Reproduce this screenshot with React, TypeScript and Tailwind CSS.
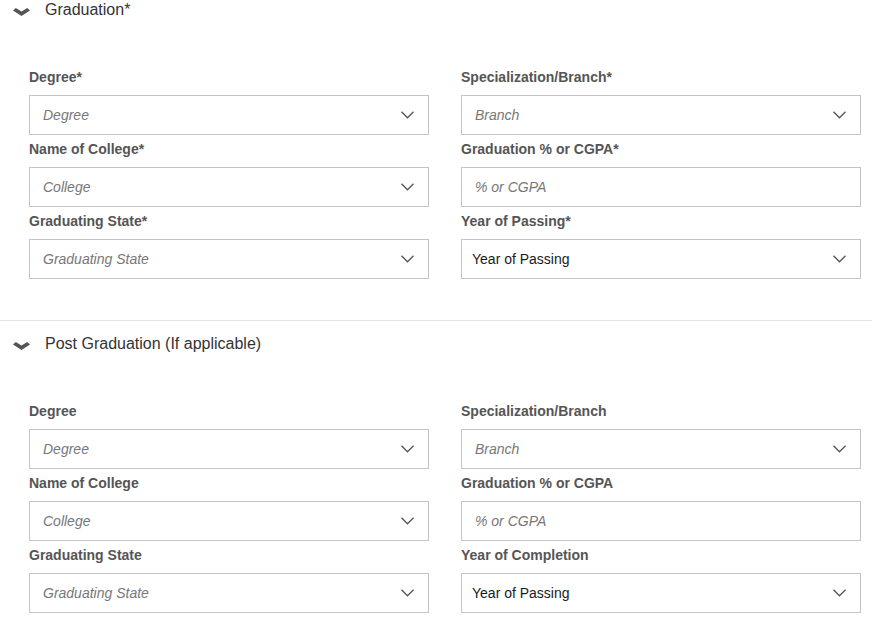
import React from "react";

type Field = { label: string; value: string; select: boolean; filled?: boolean };

const HeaderChevron = () => (
  <svg width="17" height="8" viewBox="0 0 17 8" className="block">
    <path d="M0 2.6 L2.8 0 L8.5 3.6 L14.2 0 L17 2.6 L8.5 8 Z" fill="#555" />
  </svg>
);

const SelectArrow = () => (
  <svg width="13" height="8" viewBox="0 0 13 8" className="block">
    <polyline points="0.5,0.8 6.5,6.8 12.5,0.8" fill="none" stroke="#555" strokeWidth="1.3" />
  </svg>
);

const FieldBox = ({ f }: { f: Field }) => (
  <div className="flex flex-col">
    <div className="h-[18px] mb-[9px] text-[14px] leading-[18px] font-bold text-[#555]">{f.label}</div>
    <div
      className={
        f.filled
          ? "h-[40px] border border-[#c4c4c4] bg-white flex items-center pl-[10px] pr-[14px]"
          : "h-[40px] border border-[#c4c4c4] bg-white flex items-center pl-[13px] pr-[14px]"
      }
    >
      <span
        className={
          f.filled
            ? "flex-1 text-[14px] text-[#1a1a1a]"
            : "flex-1 text-[14px] italic text-[#777]"
        }
      >
        {f.value}
      </span>
      {f.select && <SelectArrow />}
    </div>
    <div className="h-[5px]" />
  </div>
);

const Section = ({ title, left, right }: { title: string; left: Field[]; right: Field[] }) => (
  <div>
    <div className="h-[20px] flex items-center">
      <div className="w-[45px] pl-[13px] pt-[3px]">
        <HeaderChevron />
      </div>
      <div className="text-[16px] leading-[20px] text-[#333]">{title}</div>
    </div>
    <div className="pt-[48px] pl-[29px] grid grid-cols-[400px_400px] gap-x-[32px]">
      <div className="flex flex-col">
        {left.map((f) => (
          <FieldBox key={f.label} f={f} />
        ))}
      </div>
      <div className="flex flex-col">
        {right.map((f) => (
          <FieldBox key={f.label} f={f} />
        ))}
      </div>
    </div>
  </div>
);

export default function App() {
  return (
    <div className="w-[873px] h-[626px] overflow-hidden bg-white" style={{ fontFamily: '"Liberation Sans", Arial, sans-serif' }}>
      <Section
        title="Graduation*"
        left={[
          { label: "Degree*", value: "Degree", select: true },
          { label: "Name of College*", value: "College", select: true },
          { label: "Graduating State*", value: "Graduating State", select: true },
        ]}
        right={[
          { label: "Specialization/Branch*", value: "Branch", select: true },
          { label: "Graduation % or CGPA*", value: "% or CGPA", select: false },
          { label: "Year of Passing*", value: "Year of Passing", select: true, filled: true },
        ]}
      />
      <div className="mt-[36px] h-px bg-[#e6e6e6] w-[872px]" />
      <div className="pt-[13px]">
        <Section
          title="Post Graduation (If applicable)"
          left={[
            { label: "Degree", value: "Degree", select: true },
            { label: "Name of College", value: "College", select: true },
            { label: "Graduating State", value: "Graduating State", select: true },
          ]}
          right={[
            { label: "Specialization/Branch", value: "Branch", select: true },
            { label: "Graduation % or CGPA", value: "% or CGPA", select: false },
            { label: "Year of Completion", value: "Year of Passing", select: true, filled: true },
          ]}
        />
      </div>
    </div>
  );
}
